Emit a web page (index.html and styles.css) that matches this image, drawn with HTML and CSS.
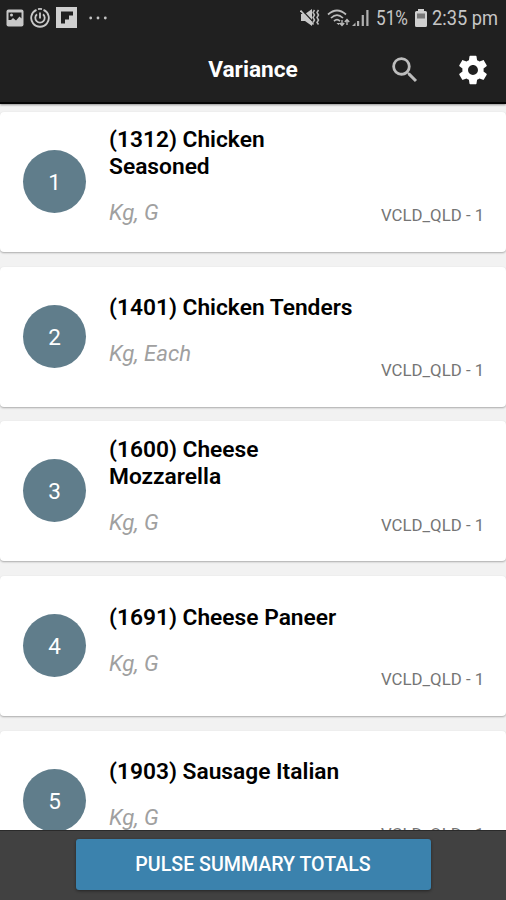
FILE: index.html
```html
<!DOCTYPE html>
<html lang="en">
<head>
<meta charset="utf-8">
<title>Variance</title>
<link rel="stylesheet" href="styles.css">
</head>
<body>
<header class="header">
  <div class="status">
    <div class="status-left">
      <svg class="i-image" width="18" height="18" viewBox="0 0 18 18"><rect x=".5" y=".5" width="17" height="17" rx="2" fill="#c8c8c8"/><path d="M2.5 3.500h13v6l-2-2-3.500 4-3-2.500-2 2h-2.500z" fill="#202020"/><circle cx="5.500" cy="6" r="1.500" fill="#c8c8c8"/></svg>
      <svg class="i-ring" width="20" height="20" viewBox="0 0 20 20" fill="none" stroke="#c8c8c8" stroke-width="1.800"><path d="M6.500 1.900A8.800 8.800 0 1 0 13.500 1.900"/><path d="M8 1.200a8.800 8.800 0 0 1 4 0"/><path d="M7 6.300a4.700 4.700 0 1 0 6 0M10 4.500v6"/></svg>
      <svg class="i-flip" width="21" height="21" viewBox="0 0 21 21"><path fill="#d0d0d0" d="M0 0h21v21H0z"/><path fill="#202020" d="M5 4.500h12v4h-4v4H9v4H5z"/></svg>
      <svg class="i-dots" width="18" height="4" viewBox="0 0 18 4" fill="#c4c4c4"><circle cx="1.700" cy="2" r="1.400"/><circle cx="9" cy="2" r="1.400"/><circle cx="16.300" cy="2" r="1.400"/></svg>
    </div>
    <div class="status-right">
      <svg class="i-mute" width="20" height="19" viewBox="0 0 20 19"><path d="M1 6h4l7-5v17l-7-5H1z" fill="#c8c8c8"/><path d="M1.500 1.500l13 14" stroke="#202020" stroke-width="1.400"/><path d="M.5 2.500l13 14" stroke="#c8c8c8" stroke-width="1.700"/><path d="M14.500 2l-1.500 2.500 1.500 2.500-1.500 2.500 1.500 2.500-1.500 2.500M18.500 2l-1.500 2.500 1.500 2.500-1.500 2.500 1.500 2.500-1.500 2.500 1.500 2" fill="none" stroke="#bcbcbc" stroke-width="1.500"/></svg>
      <svg class="i-wifi" width="24" height="18" viewBox="0 0 24 18" fill="none" stroke="#bcbcbc" stroke-width="1.700"><path d="M1 5.500Q10-2.500 19 5.500M4 9Q10 3.300 16 9M7 12.200Q10 9.200 13 12.200"/><path d="M9.500 14l2 2 2-2z" fill="#bcbcbc" stroke="none"/><path d="M15 11v5M12.800 14l2.200 2.500 2.200-2.500M20 16v-5M17.800 13l2.200-2.500 2.200 2.500" stroke-width="1.400"/></svg>
      <svg class="i-signal" width="18" height="18" viewBox="0 0 18 18" fill="#b0b0b0"><path d="M0 17l3.500-3.500v3.500zM5 12h2.200v5H5zM9.700 6h2.200v11h-2.200zM14.300 1h2.200v16h-2.200z"/></svg>
      <span class="battery-text">51%</span>
      <svg class="i-battery" width="12" height="18" viewBox="0 0 12 18"><path d="M3 0h6v2h1.500A1.500 1.500 0 0 1 12 3.500V16.500a1.500 1.500 0 0 1-1.500 1.500h-9A1.500 1.500 0 0 1 0 16.500V3.500A1.500 1.500 0 0 1 1.500 2H3z" fill="#d0d0d0"/><path d="M2 4.500h8v5H2z" fill="#777"/></svg>
      <span class="clock">2:35 pm</span>
    </div>
  </div>
  <div class="toolbar">
    <h1 class="title">Variance</h1>
    <svg class="i-search" width="34" height="34" viewBox="0 0 24 24" fill="#bdbdbd"><path d="M15.500 14h-.79l-.28-.27A6.471 6.471 0 0 0 16 9.500 6.500 6.500 0 1 0 9.500 16c1.610 0 3.090-.59 4.230-1.570l.27.28v.79l5 4.990L20.490 19l-4.990-5zm-6 0C7.010 14 5 11.990 5 9.500S7.010 5 9.500 5 14 7.010 14 9.500 11.990 14 9.500 14z"/></svg>
    <svg class="i-gear" width="34" height="34" viewBox="0 0 24 24" fill="#fff"><path d="M19.430 12.980c.04-.32.07-.64.07-.98s-.03-.66-.07-.98l2.110-1.650c.19-.15.24-.42.12-.64l-2-3.460c-.12-.22-.39-.3-.61-.22l-2.490 1c-.52-.4-1.080-.73-1.690-.98l-.38-2.650A.488.488 0 0 0 14 2h-4c-.25 0-.46.18-.49.42l-.38 2.650c-.61.25-1.170.59-1.690.98l-2.490-1c-.23-.09-.49 0-.61.22l-2 3.460c-.13.22-.07.49.12.64l2.110 1.650c-.04.32-.07.65-.07.98s.03.66.07.98l-2.110 1.650c-.19.15-.24.42-.12.64l2 3.460c.12.22.39.3.61.22l2.490-1c.52.4 1.080.73 1.690.98l.38 2.650c.03.24.24.42.49.42h4c.25 0 .46-.18.49-.42l.38-2.650c.61-.25 1.170-.59 1.690-.98l2.490 1c.23.09.49 0 .61-.22l2-3.460c.12-.22.07-.49-.12-.64l-2.110-1.650zM12 15.500c-1.930 0-3.500-1.570-3.500-3.500s1.570-3.500 3.500-3.500 3.500 1.570 3.500 3.500-1.570 3.500-3.500 3.500z"/></svg>
  </div>
</header>
<main class="list">
  <article class="card">
    <div class="badge">1</div>
    <div class="info"><h2 class="name">(1312) Chicken<br>Seasoned</h2><p class="units">Kg, G</p></div>
    <span class="code">VCLD_QLD - 1</span>
  </article>
  <article class="card">
    <div class="badge">2</div>
    <div class="info"><h2 class="name">(1401) Chicken Tenders</h2><p class="units">Kg, Each</p></div>
    <span class="code">VCLD_QLD - 1</span>
  </article>
  <article class="card">
    <div class="badge">3</div>
    <div class="info"><h2 class="name">(1600) Cheese<br>Mozzarella</h2><p class="units">Kg, G</p></div>
    <span class="code">VCLD_QLD - 1</span>
  </article>
  <article class="card">
    <div class="badge">4</div>
    <div class="info"><h2 class="name">(1691) Cheese Paneer</h2><p class="units">Kg, G</p></div>
    <span class="code">VCLD_QLD - 1</span>
  </article>
  <article class="card">
    <div class="badge">5</div>
    <div class="info"><h2 class="name">(1903) Sausage Italian</h2><p class="units">Kg, G</p></div>
    <span class="code">VCLD_QLD - 1</span>
  </article>
</main>
<footer class="footer"><button class="pulse">PULSE SUMMARY TOTALS</button></footer>
</body>
</html>
```

FILE: styles.css
```css
* { box-sizing: border-box; }
body {
  margin: 0;
  height: 900px;
  display: flex;
  flex-direction: column;
  overflow: hidden;
  background: #f2f2f2;
  font-family: Roboto, "Liberation Sans", sans-serif;
}
svg { display: block; flex: none; }
h1, h2, p { margin: 0; }
.header {
  flex: none;
  height: 104px;
  background: #202020;
  border-bottom: 2px solid #050505;
  box-shadow: 0 1px 2px rgba(0, 0, 0, .4);
  z-index: 1;
}
.status {
  height: 35px;
  display: flex;
  justify-content: space-between;
  align-items: center;
  padding: 0 8px 0 6px;
}
.status-left, .status-right { display: flex; align-items: center; }
.i-ring { margin-left: 6px; }
.i-flip { margin-left: 6px; }
.i-dots { margin-left: 12px; }
.i-wifi { margin-left: 7px; }
.i-signal { margin-left: 1px; }
.battery-text, .clock {
  color: #c6c6c6;
  font-size: 20.5px;
  line-height: 24px;
  white-space: nowrap;
  transform-origin: left center;
}
.battery-text { margin-left: 6px; width: 33px; transform: scaleX(.84); }
.i-battery { margin: 0 5px 0 6px; }
.clock { width: 66px; transform: scaleX(.89); }
.toolbar {
  height: 69px;
  display: grid;
  grid-template-columns: 1fr 34px 34px;
  column-gap: 34px;
  align-items: center;
  padding: 0 16px 0 152px;
}
.title {
  color: #fff;
  font-size: 22.7px;
  line-height: 28px;
  font-weight: 700;
  text-align: center;
  white-space: nowrap;
}
.list {
  flex: 1;
  min-height: 0;
  overflow: hidden;
  display: flex;
  flex-direction: column;
  gap: 14.7px;
  padding-top: 8px;
}
.card {
  flex: none;
  height: 140px;
  display: grid;
  grid-template-columns: 63px 1fr 103px;
  column-gap: 23px;
  align-items: center;
  padding: 0 22px 0 23px;
  background: #fff;
  border-radius: 4px;
  box-shadow: 0 1px 2px rgba(0, 0, 0, .3);
}
.badge {
  height: 63px;
  margin-bottom: 1px;
  border-radius: 50%;
  background: #607d8b;
  color: #fff;
  font-size: 22.5px;
  line-height: 65px;
  text-align: center;
}
.info { padding-bottom: 11.7px; }
.name {
  color: #000;
  font-size: 22.75px;
  line-height: 27px;
  font-weight: 600;
  white-space: nowrap;
}
.units {
  margin-top: 19px;
  color: #a0a0a0;
  font-size: 22.2px;
  line-height: 27px;
  font-style: italic;
}
.code {
  align-self: end;
  margin-bottom: 26.8px;
  color: #757575;
  font-size: 16.8px;
  line-height: 20px;
  white-space: nowrap;
}
.footer {
  flex: none;
  height: 70px;
  display: flex;
  justify-content: center;
  align-items: flex-start;
  padding-top: 8px;
  background: #414141;
  border-top: 1px solid #2a2a2a;
}
.pulse {
  width: 355px;
  height: 51px;
  padding: 0;
  border: 0;
  border-radius: 3px;
  background: #3b82ad;
  color: #fff;
  font: 500 19.6px/52px Roboto, "Liberation Sans", sans-serif;
  box-shadow: 0 1px 3px rgba(0, 0, 0, .45);
}
```
